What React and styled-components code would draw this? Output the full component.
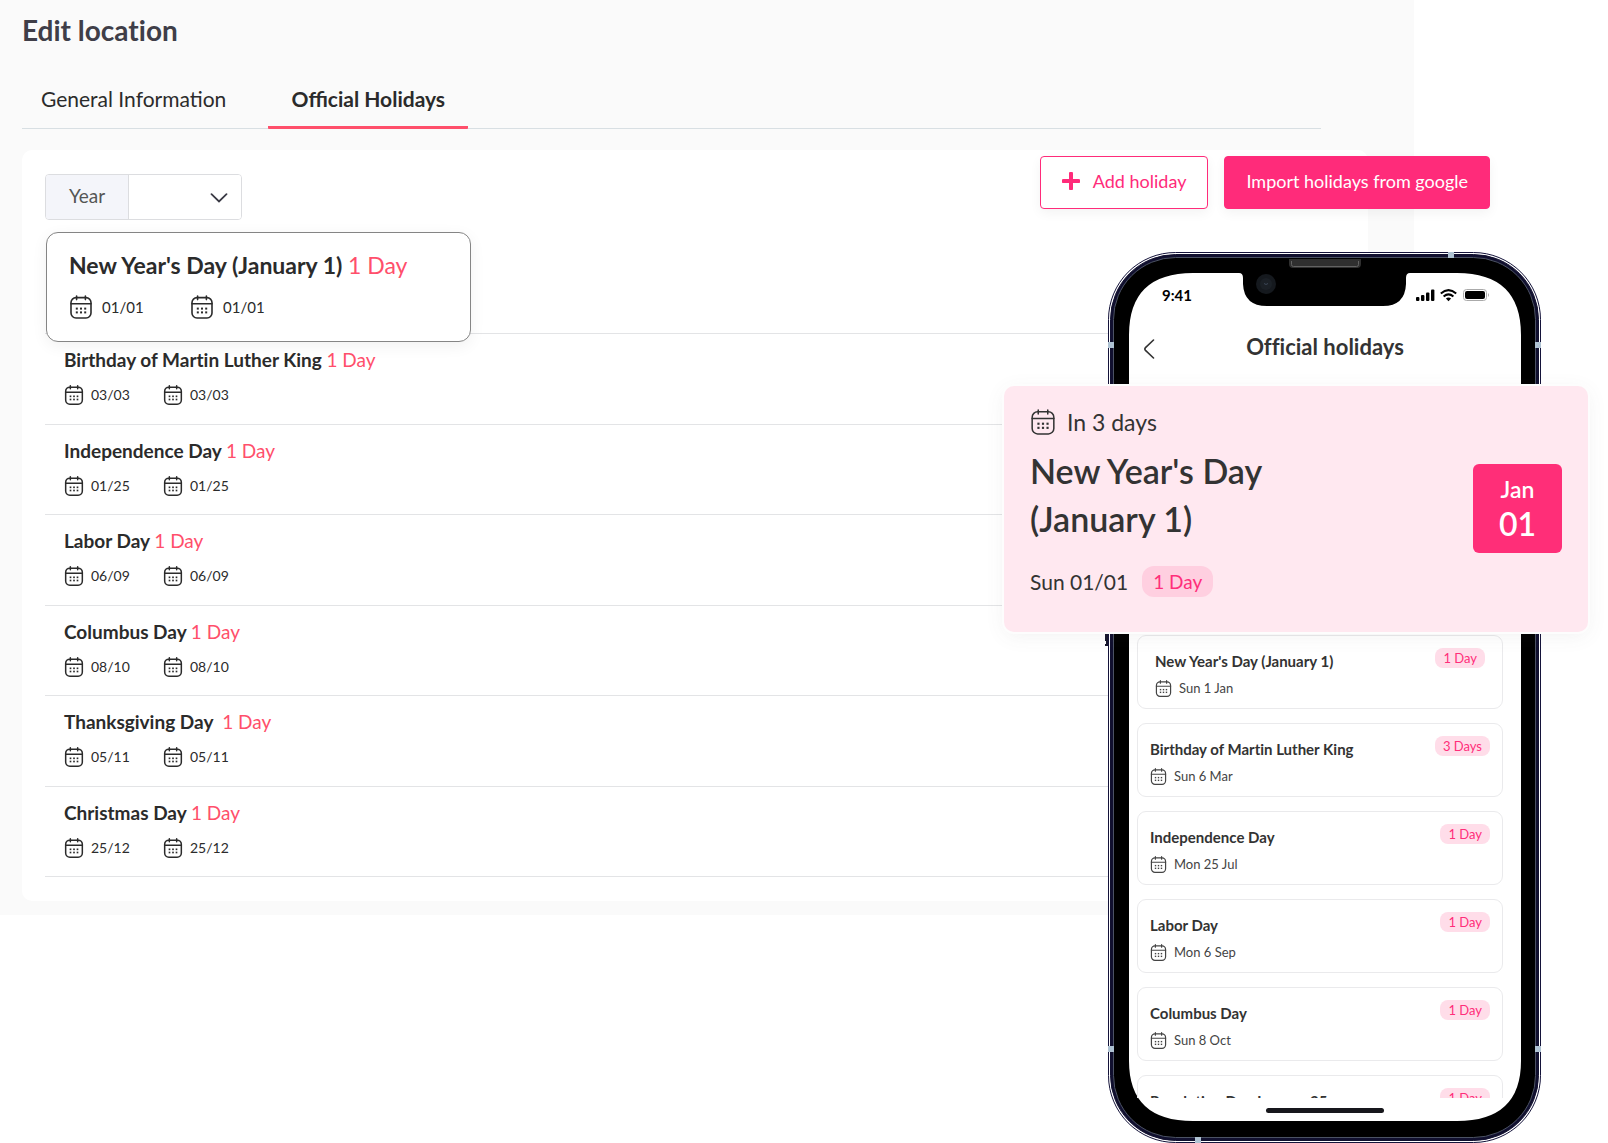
import React, { useState } from "react";
import styled, { createGlobalStyle } from "styled-components";

const holidays = [
  { name: "Birthday of Martin Luther King", from: "03/03", to: "03/03" },
  { name: "Independence Day", from: "01/25", to: "01/25" },
  { name: "Labor Day", from: "06/09", to: "06/09" },
  { name: "Columbus Day", from: "08/10", to: "08/10" },
  { name: "Thanksgiving Day ", from: "05/11", to: "05/11" },
  { name: "Christmas Day", from: "25/12", to: "25/12" },
];

const upcoming = [
  { name: "New Year's Day (January 1)", date: "Sun 1 Jan", length: "1 Day" },
  { name: "Birthday of Martin Luther King", date: "Sun 6 Mar", length: "3 Days" },
  { name: "Independence Day", date: "Mon 25 Jul", length: "1 Day" },
  { name: "Labor Day", date: "Mon 6 Sep", length: "1 Day" },
  { name: "Columbus Day", date: "Sun 8 Oct", length: "1 Day" },
  { name: "Revolution Day January 25", length: "1 Day" },
];

function CalendarIcon({ width, height, stroke = 1.6 }) {
  return (
    <svg width={width} height={height} viewBox="0 0 22 24" aria-hidden="true">
      <g fill="none" stroke="currentColor" strokeWidth={stroke} strokeLinecap="round">
        <rect x="1" y="2.6" width="20" height="20.4" rx="5" />
        <path d="M1 8.8h20M6.6 1v3.6M15.4 1v3.6" />
      </g>
      <g fill="currentColor">
        <rect x="5.8" y="12.6" width="2" height="2" />
        <rect x="10" y="12.6" width="2" height="2" />
        <rect x="14.2" y="12.6" width="2" height="2" />
        <rect x="5.8" y="16.4" width="2" height="2" />
        <rect x="10" y="16.4" width="2" height="2" />
        <rect x="14.2" y="16.4" width="2" height="2" />
      </g>
    </svg>
  );
}

function PhoneBody() {
  return (
    <PhoneDrawing viewBox="0 0 436 891" aria-hidden="true">
      <path d="M0 382h3v12H0v-2h1v-3H0z" fill="#16162c" />
      <rect x="3.5" y="0.5" width="432" height="890" rx="67" fill="#fff" stroke="#14133a" />
      <rect x="5.5" y="2.5" width="428" height="886" rx="65" fill="#11102f" stroke="#11102f" />
      <rect x="8.5" y="5.5" width="422" height="880" rx="62" fill="#000" stroke="#4b5263" />
      <g fill="#afc3d3">
        <rect x="343" y="0" width="6" height="6" />
        <rect x="3" y="90" width="6" height="6" />
        <rect x="430" y="90" width="6" height="6" />
        <rect x="3" y="794" width="6" height="6" />
        <rect x="430" y="794" width="6" height="6" />
        <rect x="90" y="885" width="6" height="6" />
      </g>
      <path
        d="M24 83Q24 21 88 21H134Q138 21 138 26V32Q139 54 162 54H278Q300 54 301 32V26Q301 21 305 21H352Q416 21 416 83V809Q416 869 352 869H88Q24 869 24 809Z"
        fill="#fff"
      />
      <path d="M184 7h72v5q0 4-4 4h-64q-4 0-4-4z" fill="#2f2f2f" />
      <path d="M186.500 9v3.500q0 2 2 2h63q2 0 2-2V9" fill="none" stroke="#626262" />
      <circle cx="161" cy="32" r="10" fill="#15191e" />
      <circle cx="161" cy="32" r="6" fill="#1b2026" />
      <path d="M159 31.500l2 1 2-1" fill="none" stroke="#3b4757" />
    </PhoneDrawing>
  );
}

function StatusIcons() {
  return (
    <svg width="74" height="14" viewBox="0 0 74 14" aria-hidden="true">
      <rect x="0" y="9" width="3.400" height="4" rx="1" />
      <rect x="5" y="7" width="3.400" height="6" rx="1" />
      <rect x="10" y="4.500" width="3.400" height="8.500" rx="1" />
      <rect x="15" y="1.500" width="3.400" height="11.500" rx="1" />
      <g fill="none" stroke="#000" strokeWidth="2">
        <path d="M24.800 5.400q7.700-6.600 15.400 0" />
        <path d="M27.600 8.500q4.900-4.200 9.800 0" />
      </g>
      <path d="M29.900 10.600q2.600-2 5.200 0l-2.600 2.600z" />
      <rect x="47.500" y="1.500" width="23" height="11" rx="3" fill="none" stroke="#aaa" />
      <rect x="49" y="3" width="20" height="8" rx="2" />
      <path d="M72 5q2 2 0 4z" fill="#aaa" />
    </svg>
  );
}

function App() {
  const [tab, setTab] = useState("holidays");

  return (
    <Page>
      <GlobalStyle />
      <Dashboard>
        <PageTitle>Edit location</PageTitle>
        <Tabs>
          <Tab $active={tab === "general"} onClick={() => setTab("general")}>
            General Information
          </Tab>
          <Tab $active={tab === "holidays"} onClick={() => setTab("holidays")}>
            Official Holidays
          </Tab>
        </Tabs>
        <Panel>
          <YearField>
            <YearLabel htmlFor="year">Year</YearLabel>
            <SelectBox>
              <YearSelect id="year" defaultValue="">
                <option value=""></option>
              </YearSelect>
              <svg width="18" height="10" viewBox="0 0 18 10" aria-hidden="true">
                <path
                  d="M1.500 1.200L9 8.500l7.500-7.300"
                  fill="none"
                  stroke="#3b3b46"
                  strokeWidth="1.800"
                  strokeLinecap="round"
                />
              </svg>
            </SelectBox>
          </YearField>
          <Actions>
            <ActionButton>
              <svg width="18" height="18" viewBox="0 0 18 18" aria-hidden="true">
                <path d="M9 1.500v15M1.500 9h15" stroke="currentColor" strokeWidth="4" strokeLinecap="round" />
              </svg>
              Add holiday
            </ActionButton>
            <ActionButton $filled>Import holidays from google</ActionButton>
          </Actions>
          <FeaturedRow>
            <FeaturedCard>
              <FeaturedName>
                New Year's Day (January 1) <Length>1 Day</Length>
              </FeaturedName>
              <FeaturedDates>
                <DateItem $gap="9px">
                  <CalendarIcon width={24} height={24} />
                  01/01
                </DateItem>
                <DateItem $gap="9px">
                  <CalendarIcon width={24} height={24} />
                  01/01
                </DateItem>
              </FeaturedDates>
            </FeaturedCard>
          </FeaturedRow>
          <HolidayList>
            {holidays.map((holiday) => (
              <HolidayRow key={holiday.name}>
                <HolidayName>
                  {holiday.name} <Length>1 Day</Length>
                </HolidayName>
                <Dates>
                  <DateItem $gap="7px">
                    <CalendarIcon width={20} height={20} stroke={1.8} />
                    {holiday.from}
                  </DateItem>
                  <DateItem $gap="7px">
                    <CalendarIcon width={20} height={20} stroke={1.8} />
                    {holiday.to}
                  </DateItem>
                </Dates>
              </HolidayRow>
            ))}
          </HolidayList>
        </Panel>
      </Dashboard>

      <Phone>
        <PhoneBody />
        <Screen>
          <StatusBar>
            9:41
            <StatusIcons />
          </StatusBar>
          <ScreenHeader>
            <BackButton aria-label="Back">
              <svg width="12" height="20" viewBox="0 0 12 20" aria-hidden="true">
                <path
                  d="M10.500 1L2.500 8.600q-1.300 1.400 0 2.800L10.500 19"
                  fill="none"
                  stroke="#333"
                  strokeWidth="1.600"
                  strokeLinecap="round"
                />
              </svg>
            </BackButton>
            <ScreenTitle>Official holidays</ScreenTitle>
          </ScreenHeader>
          <UpcomingList>
            {upcoming.map((item, i) => (
              <UpcomingCard key={item.name} $inset={i === 0}>
                <div>
                  <UpcomingName>{item.name}</UpcomingName>
                  {item.date && (
                    <UpcomingDate>
                      <CalendarIcon width={17} height={17} stroke={1.7} />
                      {item.date}
                    </UpcomingDate>
                  )}
                </div>
                <Pill>{item.length}</Pill>
              </UpcomingCard>
            ))}
          </UpcomingList>
          <HomeBar />
        </Screen>
      </Phone>

      <NextHoliday>
        <div>
          <Countdown>
            <CalendarIcon width={26} height={26} stroke={1.4} />
            In 3 days
          </Countdown>
          <NextName>
            New Year's Day
            <br />
            (January 1)
          </NextName>
          <NextDate>
            Sun 01/01
            <Pill $large>1 Day</Pill>
          </NextDate>
        </div>
        <DateBadge>
          Jan
          <DayNumber>01</DayNumber>
        </DateBadge>
      </NextHoliday>
    </Page>
  );
}

export default App;

const GlobalStyle = createGlobalStyle`
  * {
    box-sizing: border-box;
  }
  body {
    margin: 0;
    background: #fff;
    color: #2b2b2b;
    font-family: Lato, "Open Sans", sans-serif;
    font-variant-ligatures: none;
  }
  h1, h2, h3, ul, p {
    margin: 0;
    padding: 0;
  }
  ul {
    list-style: none;
  }
  button, select {
    font-family: inherit;
  }
  svg {
    flex-shrink: 0;
  }
`;

const Page = styled.div`
  position: relative;
  min-width: 1200px;
  min-height: 1143px;
  overflow: hidden;
`;

const Dashboard = styled.main`
  margin-right: 194px;
  padding: 14px 46px 14px 22px;
  background: #fafafa;
`;

const PageTitle = styled.h1`
  font-size: 28px;
  line-height: 32px;
  font-weight: 700;
  color: #3f3e48;
`;

const Tabs = styled.nav`
  display: flex;
  gap: 23px;
  margin: 41px 47px 21px 0;
  border-bottom: 1px solid #d8dfe3;
`;

const Tab = styled.button`
  min-width: 200px;
  padding: 0 19px 15px;
  margin-bottom: -1px;
  border: 0;
  border-bottom: 3px solid ${(props) => (props.$active ? "#ff4f6b" : "transparent")};
  border-radius: 1px;
  background: none;
  color: #2b2b2b;
  font-size: 21px;
  line-height: 24px;
  font-weight: ${(props) => (props.$active ? 700 : 400)};
  cursor: pointer;
`;

const Panel = styled.section`
  position: relative;
  padding: 24px 23px;
  border-radius: 10px;
  background: #fff;
`;

const YearField = styled.div`
  display: flex;
  width: 197px;
  height: 46px;
  border: 1px solid #dcdde0;
  border-radius: 4px;
  overflow: hidden;
`;

const YearLabel = styled.label`
  width: 83px;
  border-right: 1px solid #dcdde0;
  background: #f4f5fa;
  color: #555;
  font-size: 19px;
  line-height: 42px;
  text-align: center;
`;

const SelectBox = styled.div`
  position: relative;
  flex: 1;

  svg {
    position: absolute;
    top: 18px;
    right: 13px;
    pointer-events: none;
  }
`;

const YearSelect = styled.select`
  width: 100%;
  height: 100%;
  border: 0;
  background: #fff;
  appearance: none;
`;

/* hangs over the right edge of the panel */
const Actions = styled.div`
  position: absolute;
  top: 6px;
  right: -122px;
  display: flex;
  gap: 16px;
`;

const ActionButton = styled.button`
  display: flex;
  align-items: center;
  gap: 13px;
  height: 53px;
  padding: 0 21px 4px;
  border: 1px solid #ff2b7a;
  border-radius: 4px;
  background: ${(props) => (props.$filled ? "#ff2b7a" : "#fff")};
  color: ${(props) => (props.$filled ? "#fff" : "#ff2b7a")};
  box-shadow: 0 4px 12px rgba(0, 0, 0, 0.05);
  font-size: 18px;
  cursor: pointer;
`;

const FeaturedRow = styled.div`
  height: 114px;
  padding: 12px 0 0 1px;
  border-bottom: 1px solid #e3e4e6;
`;

const FeaturedCard = styled.article`
  position: relative;
  width: 425px;
  padding: 18px 22px 22px;
  border: 1px solid #858585;
  border-radius: 12px;
  background: #fff;
  box-shadow: 0 4px 16px rgba(0, 0, 0, 0.06);
`;

const FeaturedName = styled.h2`
  font-size: 23px;
  line-height: 28px;
  font-weight: 700;
`;

const Length = styled.span`
  color: #ff4f6b;
  font-weight: 400;
`;

const FeaturedDates = styled.div`
  display: grid;
  grid-template-columns: repeat(2, 121px);
  margin-top: 16px;
  font-size: 15px;
  line-height: 24px;
`;

const DateItem = styled.span`
  display: flex;
  align-items: center;
  gap: ${(props) => props.$gap};
`;

const HolidayList = styled.ul`
  display: grid;
  grid-auto-rows: 1fr;
  min-height: 543px;
`;

const HolidayRow = styled.li`
  padding: 14px 19px 0;
  border-bottom: 1px solid #e3e4e6;
`;

const HolidayName = styled.h3`
  font-size: 19px;
  line-height: 24px;
  font-weight: 700;
  white-space: pre-wrap;
`;

const Dates = styled.div`
  display: grid;
  grid-template-columns: repeat(2, 99px);
  margin-top: 13px;
  font-size: 14px;
  line-height: 20px;
`;

const Phone = styled.aside`
  position: absolute;
  top: 252px;
  right: 67px;
  width: 436px;
  height: 891px;
  padding: 21px 20px 22px 24px;
`;

const PhoneDrawing = styled.svg`
  position: absolute;
  inset: 0;
  width: 100%;
  height: 100%;
`;

const Screen = styled.div`
  position: relative;
  display: flex;
  flex-direction: column;
  height: 100%;
`;

const StatusBar = styled.div`
  display: flex;
  align-items: center;
  justify-content: space-between;
  padding: 10px 31px 0 33px;
  color: #000;
  font-size: 15px;
  line-height: 24px;
  font-weight: 700;
`;

const ScreenHeader = styled.header`
  display: flex;
  align-items: center;
  margin: 26px 0 270px;
  padding: 0 14px;
`;

const BackButton = styled.button`
  display: flex;
  padding: 4px 0 0;
  border: 0;
  background: none;
  cursor: pointer;
`;

const ScreenTitle = styled.h2`
  flex: 1;
  padding-right: 12px;
  font-size: 22px;
  line-height: 28px;
  font-weight: 700;
  color: #333;
  text-align: center;
`;

const UpcomingList = styled.ul`
  display: flex;
  flex: 1;
  flex-direction: column;
  gap: 14px;
  min-height: 0;
  margin: 4px 18px 0 8px;
  overflow: hidden;
`;

const UpcomingCard = styled.li`
  display: flex;
  flex-shrink: 0;
  align-items: flex-start;
  justify-content: space-between;
  height: 74px;
  padding: 12px ${(props) => (props.$inset ? "17px" : "12px")} 0;
  border: 1px solid #eaeaec;
  border-radius: 9px;
`;

const UpcomingName = styled.h3`
  margin-top: 3px;
  font-size: 15px;
  line-height: 20px;
  font-weight: 700;
  color: #333;
`;

const UpcomingDate = styled.p`
  display: flex;
  align-items: center;
  gap: 7px;
  margin-top: 8px;
  color: #444;
  font-size: 13px;
  line-height: 18px;
`;

const Pill = styled.span`
  padding: ${(props) => (props.$large ? "0 11px" : "0 8px")};
  border-radius: ${(props) => (props.$large ? "12px" : "8px")};
  background: ${(props) => (props.$large ? "#ffcfe0" : "#ffdde9")};
  color: #ff2e7a;
  font-size: ${(props) => (props.$large ? "19px" : "13px")};
  line-height: ${(props) => (props.$large ? "31px" : "20px")};
`;

const HomeBar = styled.div`
  width: 118px;
  height: 5px;
  margin: 10px auto 8px;
  border-radius: 3px;
  background: #17171c;
`;

const NextHoliday = styled.article`
  position: absolute;
  top: 386px;
  right: 20px;
  display: flex;
  justify-content: space-between;
  width: 584px;
  height: 246px;
  padding: 22px 26px 0;
  border-radius: 10px;
  background: #ffe8f0;
  box-shadow: 0 0 0 2px #fdfdfd, 0 4px 20px rgba(90, 90, 90, 0.08);
  color: #333;
`;

const Countdown = styled.p`
  display: flex;
  align-items: center;
  gap: 11px;
  font-size: 23px;
  line-height: 28px;
`;

const NextName = styled.h2`
  margin-top: 11px;
  font-size: 34px;
  line-height: 48px;
  font-weight: 600;
`;

const NextDate = styled.p`
  display: flex;
  align-items: center;
  gap: 14px;
  margin-top: 23px;
  font-size: 21px;
`;

const DateBadge = styled.div`
  display: flex;
  flex-direction: column;
  align-items: center;
  align-self: flex-start;
  width: 89px;
  height: 89px;
  margin-top: 56px;
  padding-top: 11px;
  border-radius: 6px;
  background: #ff2e78;
  color: #fff;
  font-size: 23px;
  line-height: 28px;
  font-weight: 600;
`;

const DayNumber = styled.span`
  font-size: 32px;
  line-height: 42px;
`;
